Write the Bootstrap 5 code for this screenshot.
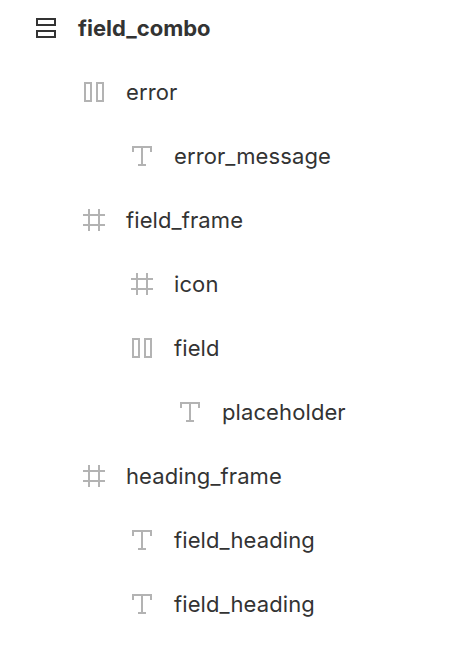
<!DOCTYPE html>
<html lang="en">
<head>
<meta charset="utf-8">
<meta name="viewport" content="width=device-width, initial-scale=1">
<title>Layers</title>
<link rel="stylesheet" href="https://cdn.jsdelivr.net/npm/bootstrap@5.3.0/dist/css/bootstrap.min.css">
<style>
body{font-family:Inter,"Liberation Sans",sans-serif;font-size:22px;color:#333;background:#fff;overflow:hidden}
.layers{margin-top:-4px}
.layer{height:64px;gap:16px;line-height:32px;white-space:nowrap;letter-spacing:.1px}
.layer svg{width:32px;height:32px;flex:none;fill:none;stroke:#b3b3b3;stroke-width:2}
.layer.top{letter-spacing:0}
.layer.top svg{stroke:#333}
.lv0{padding-left:30px}.lv1{padding-left:78px}.lv2{padding-left:126px}.lv3{padding-left:174px}
</style>
</head>
<body>
<svg class="d-none" aria-hidden="true">
<symbol id="stack" viewBox="0 0 32 32"><path d="M7 7h18v6H7zM7 19h18v6H7z"/></symbol>
<symbol id="cols" viewBox="0 0 32 32"><path d="M7 7h6v18H7zM19 7h6v18h-6z"/></symbol>
<symbol id="hash" viewBox="0 0 32 32"><path d="M11 5v22M21 5v22M5 11h22M5 21h22"/></symbol>
<symbol id="type" viewBox="0 0 32 32"><path d="M7 12V7h18v5M16 7v18M12 25h8"/></symbol>
</svg>
<ul class="layers list-unstyled mb-0">
<li class="layer top lv0 d-flex align-items-center fw-bold"><svg><use href="#stack"/></svg><span>field_combo</span></li>
<li class="layer lv1 d-flex align-items-center"><svg><use href="#cols"/></svg><span>error</span></li>
<li class="layer lv2 d-flex align-items-center"><svg><use href="#type"/></svg><span>error_message</span></li>
<li class="layer lv1 d-flex align-items-center"><svg><use href="#hash"/></svg><span>field_frame</span></li>
<li class="layer lv2 d-flex align-items-center"><svg><use href="#hash"/></svg><span>icon</span></li>
<li class="layer lv2 d-flex align-items-center"><svg><use href="#cols"/></svg><span>field</span></li>
<li class="layer lv3 d-flex align-items-center"><svg><use href="#type"/></svg><span>placeholder</span></li>
<li class="layer lv1 d-flex align-items-center"><svg><use href="#hash"/></svg><span>heading_frame</span></li>
<li class="layer lv2 d-flex align-items-center"><svg><use href="#type"/></svg><span>field_heading</span></li>
<li class="layer lv2 d-flex align-items-center"><svg><use href="#type"/></svg><span>field_heading</span></li>
</ul>
<script src="https://cdn.jsdelivr.net/npm/bootstrap@5.3.0/dist/js/bootstrap.bundle.min.js"></script>
</body>
</html>
